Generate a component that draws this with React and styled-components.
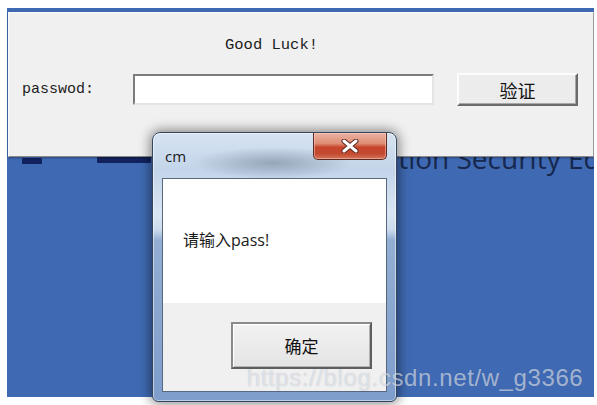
import styled, { createGlobalStyle } from "styled-components";

const Global = createGlobalStyle`
  html, body {
    margin: 0;
    background: #fff;
  }
  * { box-sizing: border-box; }
`;

const Screen = styled.div`
  position: relative;
  width: 597px;
  height: 405px;
  padding: 8px 3px 8px 7px;
`;

// desktop behind the windows
const Desktop = styled.div`
  position: relative;
  width: 587px;
  height: 389px;
  background: #3f6ab3;
  overflow: hidden;
  padding: 4px 0 0 1px;
`;

const Backdrop = styled.div`
  position: absolute;
  left: 287px;
  top: 136px;
  font-family: "Open Sans", sans-serif;
  font-size: 28px;
  line-height: 1;
  color: #17284f;
  white-space: nowrap;
`;

const Stroke = styled.span`
  position: absolute;
  top: ${(p) => p.$top}px;
  left: ${(p) => p.$left}px;
  width: ${(p) => p.$w}px;
  height: 6px;
  background: #12225e;
  border-radius: 1px;
`;

const MainWindow = styled.div`
  position: relative;
  z-index: 1;
  width: 586px;
  height: 145px;
  background: #f0f0f0;
  border: 1px solid;
  border-color: #fafafa #9a9a9a #8a8a8a #fafafa;
  box-shadow: 0 1px 2px rgba(0, 0, 0, 0.35);
  padding: 23px 0 0 13px;
  display: flex;
  flex-direction: column;
  font-family: "Liberation Mono", monospace;
  color: #1c1c1c;
`;

const Heading = styled.div`
  padding-left: 203px;
  font-size: 15.5px;
  line-height: 18px;
`;

const FormRow = styled.div`
  margin-top: 19px;
  display: flex;
  align-items: center;
  height: 33px;
`;

const Label = styled.span`
  width: 111px;
  font-size: 15px;
`;

const Field = styled.div`
  width: 301px;
  height: 31px;
  background: #fff;
  border: 2px solid;
  border-color: #7c7c7c #e4e4e4 #e4e4e4 #7c7c7c;
`;

const ClassicButton = styled.div`
  margin-left: 23px;
  width: 121px;
  height: 33px;
  display: flex;
  align-items: center;
  justify-content: center;
  background: #ececec;
  border: 2px solid;
  border-color: #fcfcfc #6a6a6a #6a6a6a #fcfcfc;
  box-shadow: inset -1px -1px #a8a8a8;
  font-family: "Noto Sans CJK SC", sans-serif;
  font-size: 18px;
  color: #111;
`;

const Dialog = styled.div`
  position: absolute;
  z-index: 2;
  left: 152px;
  top: 132px;
  width: 245px;
  height: 270px;
  border: 1px solid #34465e;
  border-radius: 8px 8px 6px 6px;
  background:
    radial-gradient(ellipse 80px 16px at 120px 30px, rgba(110, 125, 145, 0.55), transparent),
    linear-gradient(180deg, #d6e3f1 0%, #c3d5ea 14%, #d9e5f2 30%, #cddcec 36%, #93aed3 40%, #7e9dcb 100%);
  box-shadow: 0 0 12px 2px rgba(0, 0, 0, 0.45), inset 0 0 0 1px rgba(255, 255, 255, 0.5);
  padding: 0 9px 9px 9px;
  display: flex;
  flex-direction: column;
`;

const TitleBar = styled.div`
  height: 45px;
  display: flex;
  align-items: center;
  padding-left: 3px;
  font-family: "Open Sans", sans-serif;
  font-size: 15px;
  color: #1a1a1a;
`;

const CloseButton = styled.div`
  position: absolute;
  top: 0;
  right: 9px;
  width: 74px;
  height: 27px;
  display: flex;
  align-items: center;
  justify-content: center;
  border: 1px solid #5e2a20;
  border-top: none;
  border-radius: 0 0 5px 5px;
  background: linear-gradient(180deg, #eab3a3 0%, #df8d75 40%, #c8452c 55%, #c24a30 80%, #d4745a 100%);
  box-shadow: inset 0 0 0 1px rgba(255, 220, 210, 0.45);
`;

const Client = styled.div`
  flex: 1;
  display: flex;
  flex-direction: column;
  border: 1px solid #56697f;
`;

const Message = styled.div`
  height: 124px;
  background: #fff;
  padding: 50px 0 0 20px;
  font-family: "Open Sans", "Noto Sans CJK SC", sans-serif;
  font-size: 16px;
  line-height: 22px;
  color: #1a1a1a;
`;

const Footer = styled.div`
  flex: 1;
  background: #f0f0f0;
  display: flex;
  justify-content: flex-end;
  align-items: flex-start;
  padding: 19px 14px 0 0;
`;

const OkButton = styled.div`
  width: 141px;
  height: 47px;
  display: flex;
  align-items: center;
  justify-content: center;
  background: linear-gradient(180deg, #f2f2f2, #e4e4e4);
  border: 2px solid;
  border-color: #8a8a8a #5e5e5e #5e5e5e #8a8a8a;
  box-shadow: inset 1px 1px #fff, inset -1px -1px #b4b4b4;
  font-family: "Noto Sans CJK SC", sans-serif;
  font-size: 17px;
  color: #111;
`;

const Watermark = styled.div`
  position: absolute;
  z-index: 3;
  left: 247px;
  top: 364px;
  font-family: "Liberation Sans", sans-serif;
  font-size: 24px;
  letter-spacing: 0.6px;
  color: rgba(255, 255, 255, 0.55);
  text-shadow: 0 0 1px rgba(40, 60, 100, 0.3);
  white-space: nowrap;
`;

function CloseGlyph() {
  return (
    <svg width="18" height="14" viewBox="0 0 18 14">
      <path d="M3 2 L15 12 M15 2 L3 12" stroke="#5a2a22" strokeWidth="5" strokeLinecap="round" />
      <path d="M3 2 L15 12 M15 2 L3 12" stroke="#fff" strokeWidth="3" strokeLinecap="round" />
    </svg>
  );
}

export default function App() {
  return (
    <>
      <Global />
      <Screen>
        <Desktop>
          <Backdrop>Information Security Ed</Backdrop>
          <Stroke $left={15} $top={150} $w={20} />
          <Stroke $left={90} $top={149} $w={54} />
          <MainWindow>
            <Heading>Good Luck!</Heading>
            <FormRow>
              <Label>passwod:</Label>
              <Field />
              <ClassicButton>验证</ClassicButton>
            </FormRow>
          </MainWindow>
        </Desktop>

        <Dialog>
          <TitleBar>cm</TitleBar>
          <CloseButton>
            <CloseGlyph />
          </CloseButton>
          <Client>
            <Message>请输入pass!</Message>
            <Footer>
              <OkButton>确定</OkButton>
            </Footer>
          </Client>
        </Dialog>

        <Watermark>https://blog.csdn.net/w_g3366</Watermark>
      </Screen>
    </>
  );
}
